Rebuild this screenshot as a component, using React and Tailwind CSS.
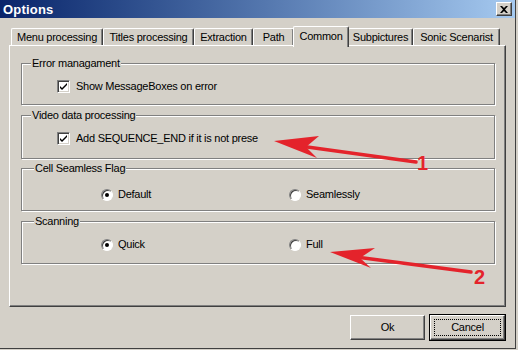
import React from "react";

function Check() {
  return (
    <span className="inline-flex w-[13px] h-[13px] bg-white border-t border-l border-[#808080] border-r border-b border-r-white border-b-white shadow-[inset_1px_1px_0_#404040,inset_-1px_-1px_0_#d4d0c8] items-center justify-center">
      <svg width="9" height="9" viewBox="0 0 9 9">
        <path d="M1 4 L3 6 L8 1 L8 3 L3 8 L1 6 Z" fill="#000" />
      </svg>
    </span>
  );
}

function Radio({ on }) {
  return (
    <span className="relative inline-flex w-[12px] h-[12px] rounded-full bg-white border border-t-[#808080] border-l-[#808080] border-r-white border-b-white shadow-[inset_1px_1px_0_#404040] items-center justify-center">
      {on && <span className="w-[4px] h-[4px] rounded-full bg-black" />}
    </span>
  );
}

function Group({ label, h, pt, children, mt, lx = 10 }) {
  return (
    <div
      className={`relative border border-[#808080] shadow-[inset_1px_1px_0_#fff,1px_1px_0_#fff] ${h} ${pt} ${mt}`}
    >
      <span
        className={`absolute -top-[8px] bg-[#d4d0c8] px-[1px] leading-[14px] ${lx === 10 ? "left-[9px]" : "left-[12px]"}`}
      >
        {label}
      </span>
      {children}
    </div>
  );
}

export default function App() {
  const tabs = [
    ["Menu processing", "w-[92px]"],
    ["Titles processing", "w-[91px]"],
    ["Extraction", "w-[59px]"],
    ["Path", "w-[41px]"],
    ["Common", "w-[56px]"],
    ["Subpictures", "w-[65px]"],
    ["Sonic Scenarist", "w-[87px]"],
  ];
  return (
    <div className="relative w-[518px] h-[350px] bg-[#d4d0c8] overflow-hidden font-['Liberation_Sans',Arial,sans-serif] text-[11px] tracking-[-0.25px] text-black">
      <div className="w-[516px] h-[349px] border-r border-b border-[#404040] flex flex-col">
        {/* Title bar */}
        <div className="h-[18px] w-[515px] bg-gradient-to-r from-[#0a246a] to-[#a6caf0] flex items-center justify-between pl-[3px] pr-[3px]">
          <span className="text-white font-bold text-[13px] leading-none tracking-[0.2px]">Options</span>
          <span className="w-[16px] h-[14px] bg-[#d4d0c8] border-t border-l border-white border-r border-b border-r-[#404040] border-b-[#404040] shadow-[inset_-1px_-1px_0_#808080] flex items-center justify-center">
            <svg width="8" height="7" viewBox="0 0 8 7">
              <path d="M0 0 L2 0 L4 2 L6 0 L8 0 L5 3.5 L8 7 L6 7 L4 5 L2 7 L0 7 L3 3.5 Z" fill="#000" />
            </svg>
          </span>
        </div>

        {/* Tabs */}
        <div className="h-[27px] pl-[11px] flex items-end">
          {tabs.map(([t, w]) =>
            t === "Common" ? (
              <div
                key={t}
                className={`${w} h-[21px] -mb-[2px] -mx-[1px] z-10 bg-[#d4d0c8] border-l border-t border-white border-r border-r-[#404040] shadow-[inset_-1px_0_0_#808080] rounded-tl-[2px] rounded-tr-[2px] flex items-start justify-center pt-[3px] leading-[13px]`}
              >
                {t}
              </div>
            ) : (
              <div
                key={t}
                className={`${w} h-[17px] bg-[#d4d0c8] border-l border-t border-white border-r border-r-[#404040] shadow-[inset_-1px_0_0_#808080] rounded-tl-[2px] rounded-tr-[2px] flex items-center justify-center leading-[13px]`}
              >
                {t}
              </div>
            )
          )}
        </div>

        {/* Panel */}
        <div className="ml-[9px] w-[497px] h-[262px] border-l border-t border-white border-r border-b border-r-[#404040] border-b-[#404040] shadow-[inset_-1px_-1px_0_#808080] pt-[17px] pl-[11px] pr-[10px]">
          <Group label="Error managament" h="h-[42px]" pt="pt-[16px]" mt="">
            <div className="flex items-center pl-[35px] gap-[6px]">
              <Check />
              <span className="leading-[13px]">Show MessageBoxes on error</span>
            </div>
          </Group>
          <Group label="Video data processing" h="h-[44px]" pt="pt-[16px]" mt="mt-[10px]">
            <div className="flex items-center pl-[35px] gap-[6px]">
              <Check />
              <span className="leading-[13px]">Add SEQUENCE_END if it is not prese</span>
            </div>
          </Group>
          <Group label="Cell Seamless Flag" h="h-[43px]" pt="pt-[19px]" mt="mt-[9px]" lx={12}>
            <div className="flex items-center pl-[79px]">
              <div className="w-[188px] flex items-center gap-[5px]">
                <Radio on />
                <span className="leading-[13px]">Default</span>
              </div>
              <div className="flex items-center gap-[5px]">
                <Radio />
                <span className="leading-[13px]">Seamlessly</span>
              </div>
            </div>
          </Group>
          <Group label="Scanning" h="h-[43px]" pt="pt-[16px]" mt="mt-[10px]" lx={12}>
            <div className="flex items-center pl-[79px]">
              <div className="w-[188px] flex items-center gap-[5px]">
                <Radio on />
                <span className="leading-[13px]">Quick</span>
              </div>
              <div className="flex items-center gap-[5px]">
                <Radio />
                <span className="leading-[13px]">Full</span>
              </div>
            </div>
          </Group>
        </div>

        {/* Buttons */}
        <div className="flex justify-end gap-[4px] pr-[9px] mt-[7px]">
          <div className="mt-[1px] w-[75px] h-[25px] border-l border-t border-white border-r border-b border-r-[#404040] border-b-[#404040] shadow-[inset_-1px_-1px_0_#808080] flex items-center justify-center">
            Ok
          </div>
          <div className="w-[77px] h-[27px] border border-black p-0">
            <div className="w-full h-full border-l border-t border-white border-r border-b border-r-[#404040] border-b-[#404040] shadow-[inset_-1px_-1px_0_#808080] flex items-center justify-center p-[3px]">
              <div className="w-full h-full border border-dotted border-black flex items-center justify-center">
                Cancel
              </div>
            </div>
          </div>
        </div>
      </div>

      {/* Annotations */}
      <svg className="absolute inset-0 pointer-events-none" width="518" height="350" viewBox="0 0 518 350">
        <line x1="300" y1="146" x2="416" y2="162" stroke="#e4232b" strokeWidth="3.5" strokeLinecap="round" />
        <polygon points="274,141 319,136 306,147 317,158" fill="#e4232b" />
        <line x1="356" y1="257" x2="471" y2="272" stroke="#e4232b" strokeWidth="3.5" strokeLinecap="round" />
        <polygon points="330,252 375,248 360,258 371,268" fill="#e4232b" />
      </svg>
      <span className="absolute left-[417px] top-[153px] text-[#e4232b] font-bold text-[20px] leading-[20px] font-['Liberation_Sans',Arial,sans-serif]">1</span>
      <span className="absolute left-[474px] top-[267px] text-[#e4232b] font-bold text-[20px] leading-[20px] font-['Liberation_Sans',Arial,sans-serif]">2</span>
    </div>
  );
}
